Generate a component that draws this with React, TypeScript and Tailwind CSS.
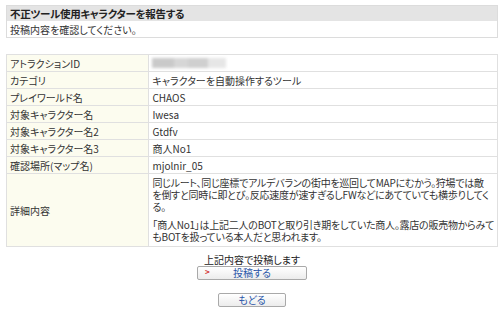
const ROWS: { label: string; value: React.ReactNode }[] = [
  {
    label: 'アトラクションID',
    value: (
      <div className="flex h-[10px] w-[74px] items-center blur-[1.5px]">
        <div className="h-full w-[22px] bg-[#c9c9c9]" />
        <div className="h-full w-[14px] bg-[#d6d6d6]" />
        <div className="h-full w-[20px] bg-[#cfcfcf]" />
        <div className="h-full w-[18px] bg-[#e6e6e6]" />
      </div>
    ),
  },
  { label: 'カテゴリ', value: 'キャラクターを自動操作するツール' },
  { label: 'プレイワールド名', value: 'CHAOS' },
  { label: '対象キャラクター名', value: 'Iwesa' },
  { label: '対象キャラクター名2', value: 'Gtdfv' },
  { label: '対象キャラクター名3', value: '商人No1' },
  { label: '確認場所(マップ名)', value: 'mjolnir_05' },
];

const DETAIL = [
  [
    '同じルート、同じ座標でアルデバランの街中を巡回してMAPにむかう。狩場では敵',
    'を倒すと同時に即とび。反応速度が速すぎるしFWなどにあてていても横歩りしてく',
    'る。',
  ],
  [
    '「商人No1」は上記二人のBOTと取り引き期をしていた商人。露店の販売物からみて',
    'もBOTを扱っている本人だと思われます。',
  ],
];

function Button({ label, marker, className }: { label: string; marker?: boolean; className?: string }) {
  return (
    <div
      className={`relative flex h-[14px] items-center justify-center rounded-[2px] border border-[#a9a9a9] bg-gradient-to-b from-white to-[#ececec] text-[10px] leading-none text-[#2a56a8] ${className ?? ''}`}
    >
      {marker && (
        <span className="absolute left-[7px] top-[1px] text-[8px] font-bold text-[#d23030]">&gt;</span>
      )}
      {label}
    </div>
  );
}

export default function App() {
  return (
    <div className="min-h-[319px] w-[504px] bg-white px-[6px] pt-[5px] font-['Noto_Sans_CJK_JP','Noto_Sans',sans-serif] text-[10px] text-[#333] [font-feature-settings:'palt']">
      <div className="border border-[#dcdcdc]">
        <div className="flex h-[15px] items-center bg-[#e4e4e4] pl-[3px] text-[10.5px] font-bold tracking-[-0.3px] text-[#222]">
          不正ツール使用キャラクターを報告する
        </div>
        <div className="flex h-[16px] items-center pl-[3px]">投稿内容を確認してください。</div>
      </div>

      <table className="mt-[16px] w-full border-collapse border border-[#e0e0e0]">
        <tbody>
          {ROWS.map((r) => (
            <tr key={r.label} className="h-[17px]">
              <td className="w-[182px] border border-[#e0e0e0] bg-[#fcfcef] pl-[3px] align-middle">{r.label}</td>
              <td className="border border-[#e0e0e0] pl-[3px] align-middle">{r.value}</td>
            </tr>
          ))}
          <tr className="h-[66px]">
            <td className="border border-[#e0e0e0] bg-[#fcfcef] pl-[3px] align-middle">詳細内容</td>
            <td className="border border-[#e0e0e0] px-[3px] py-[3px] align-top leading-[12px] tracking-[-0.25px]">
              <div className="flex flex-col gap-[6px]">
                {DETAIL.map((para, i) => (
                  <div key={i} className="flex flex-col">
                    {para.map((line) => (
                      <span key={line} className="whitespace-nowrap">
                        {line}
                      </span>
                    ))}
                  </div>
                ))}
              </div>
            </td>
          </tr>
        </tbody>
      </table>

      <div className="mt-[7px] flex flex-col items-center">
        <div className="leading-[12px] text-[#222]">上記内容で投稿します</div>
        <Button label="投稿する" marker className="w-[110px]" />
        <Button label="もどる" className="mt-[13px] w-[68px]" />
      </div>
    </div>
  );
}
